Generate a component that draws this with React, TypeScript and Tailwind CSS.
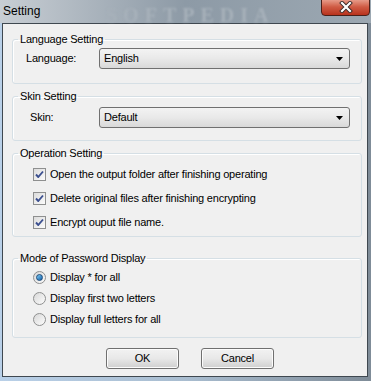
import React from "react";

const CheckBox = ({ checked }: { checked: boolean }) => (
  <span className="flex h-[13px] w-[13px] shrink-0 items-center justify-center border border-[#8e8f8f] bg-gradient-to-br from-[#dcdcdc] to-[#fbfbfb]">
    {checked && (
      <svg width="11" height="11" viewBox="0 0 11 11">
        <path
          d="M2 5.5 L4.3 8 L9 2.5"
          fill="none"
          stroke="#3b4f8f"
          strokeWidth="1.9"
          strokeLinejoin="round"
        />
      </svg>
    )}
  </span>
);

const Radio = ({ checked }: { checked: boolean }) => (
  <span className="flex h-[13px] w-[13px] shrink-0 items-center justify-center rounded-full border border-[#8e8f8f] bg-gradient-to-br from-[#d8d8d8] to-[#fcfcfc]">
    {checked && (
      <span className="h-[7px] w-[7px] rounded-full border border-[#1b4a7a] bg-gradient-to-br from-[#7fd0f7] to-[#0e5da6]" />
    )}
  </span>
);

const Combo = ({ value }: { value: string }) => (
  <div className="flex h-[21px] w-[251px] items-center justify-between rounded-[3px] border border-[#707070] bg-gradient-to-b from-[#f3f3f3] via-[#e9e9e9] to-[#d9d9d9] pl-[4px] pr-[6px]">
    <span>{value}</span>
    <svg width="7" height="4" viewBox="0 0 7 4">
      <path d="M0 0 H7 L3.5 4 Z" fill="#000" />
    </svg>
  </div>
);

const WinButton = ({ label }: { label: string }) => (
  <button className="flex h-[21px] w-[73px] items-center justify-center rounded-[3px] border border-[#707070] bg-gradient-to-b from-[#f2f2f2] via-[#e8e8e8] to-[#d0d0d0] shadow-[inset_0_0_0_1px_#fcfcfc]">
    {label}
  </button>
);

const App = () => {
  const options = [
    "Open the output folder after finishing operating",
    "Delete original files after finishing encrypting",
    "Encrypt ouput file name.",
  ];
  const modes = [
    "Display * for all",
    "Display first two letters",
    "Display full letters for all",
  ];

  return (
    <div className="relative h-[381px] w-[371px] overflow-hidden bg-gradient-to-r from-[#b9d0e8] via-[#a9bdd0] to-[#7f8c98] font-['Liberation_Sans',Arial,sans-serif] text-[11px] leading-[13px] tracking-[-0.2px] text-black">
      {/* title bar */}
      <div className="relative h-[23px] bg-gradient-to-r from-[#c8ced4] via-[#8d9aa6] to-[#9ca8b2]">
        <span className="absolute left-[3px] top-[4px] text-[12px] leading-[14px] tracking-normal text-black">
          Setting
        </span>
        <span className="absolute left-[106px] top-0 select-none font-['Liberation_Serif',serif] text-[20px] font-bold leading-normal tracking-[6px] text-[#a7b1ba] blur-[1px]">
          SOFTPEDIA
        </span>
        <div className="absolute right-[1px] top-[-2px] flex h-[18px] w-[49px] items-center justify-center rounded-b-[4px] border border-[#4a2019] bg-gradient-to-b from-[#e9a392] via-[#cf5a43] to-[#b8321c]">
          <svg width="14" height="12" viewBox="0 0 14 12">
            <path d="M3 2 L11 10 M11 2 L3 10" stroke="#3a2a28" strokeWidth="4" strokeLinecap="square" />
            <path d="M3 2 L11 10 M11 2 L3 10" stroke="#fff" strokeWidth="2.2" strokeLinecap="square" />
          </svg>
        </div>
      </div>

      {/* client area */}
      <div className="ml-[2px] h-[354px] w-[366px] border border-[#3f4850] bg-[#f0f0f0] pl-[9px]">
        <fieldset className="mt-[9px] w-[350px] rounded-[3px] border border-[#d5dfe5] pb-[14px] pt-[2px] shadow-[inset_1px_1px_0_#fff]">
          <legend className="ml-[5px] px-[2px]">Language Setting</legend>
          <div className="flex items-center pl-[13px]">
            <span className="w-[73px]">Language:</span>
            <Combo value="English" />
          </div>
        </fieldset>

        <fieldset className="mt-[6px] w-[350px] rounded-[3px] border border-[#d5dfe5] pb-[12px] pt-[4px] shadow-[inset_1px_1px_0_#fff]">
          <legend className="ml-[5px] px-[2px]">Skin Setting</legend>
          <div className="flex items-center pl-[17px]">
            <span className="w-[69px]">Skin:</span>
            <Combo value="Default" />
          </div>
        </fieldset>

        <fieldset className="mt-[6px] w-[350px] rounded-[3px] border border-[#d5dfe5] pb-[6px] pt-[6px] shadow-[inset_1px_1px_0_#fff]">
          <legend className="ml-[5px] px-[2px]">Operation Setting</legend>
          <div className="flex flex-col gap-[8px] pl-[20px]">
            {options.map((o) => (
              <label key={o} className="flex h-[16px] items-center gap-[4px]">
                <CheckBox checked />
                <span>{o}</span>
              </label>
            ))}
          </div>
        </fieldset>

        <fieldset className="mt-[15px] w-[350px] rounded-[3px] border border-[#d5dfe5] pb-[10px] pt-[4px] shadow-[inset_1px_1px_0_#fff]">
          <legend className="ml-[5px] px-[2px]">Mode of Password Display</legend>
          <div className="flex flex-col gap-[5px] pl-[20px]">
            {modes.map((m, i) => (
              <label key={m} className="flex h-[16px] items-center gap-[4px]">
                <Radio checked={i === 0} />
                <span>{m}</span>
              </label>
            ))}
          </div>
        </fieldset>

        <div className="mt-[10px] flex gap-[22px] pl-[94px]">
          <WinButton label="OK" />
          <WinButton label="Cancel" />
        </div>
      </div>
    </div>
  );
};

export default App;
